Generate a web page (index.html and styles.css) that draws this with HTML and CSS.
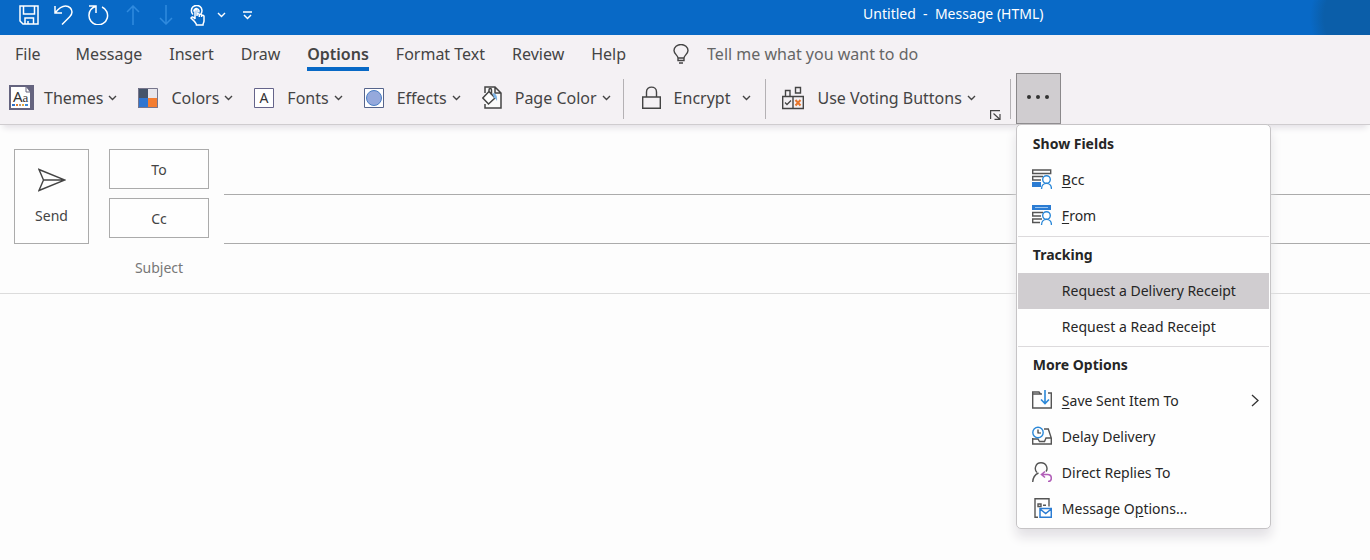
FILE: index.html
```html
<!DOCTYPE html>
<html lang="en">

<head>
    <meta charset="utf-8">
    <meta name="viewport" content="width=device-width, initial-scale=1.0">
    <title>Untitled - Message (HTML)</title>
    <link rel="stylesheet" href="styles.css">
</head>

<body>
    <svg class="sprite" aria-hidden="true">
        <symbol id="chevron" viewBox="0 0 9 6">
            <path d="M1 1l3.5 3.5L8 1" fill="none" stroke="currentColor" stroke-width="1.4" />
        </symbol>
    </svg>

    <header class="titlebar">
        <div class="quick">
            <button aria-label="Save">
                <svg width="20" height="20" viewBox="0 0 20 20"><path d="M1 1h18v18H4l-3-3zM4.500 1v8h11V1M6 19v-6h8.500v6M9 16v3" /></svg>
            </button>
            <button aria-label="Undo">
                <svg width="19" height="20" viewBox="0 0 19 20"><path d="M1 1v7h7M1.500 7.500C5 3 8 1 11.500 1c4 0 6.500 3 6.500 6 0 2-1 3.500-2.500 5L8 19.500" /></svg>
            </button>
            <button aria-label="Redo">
                <svg width="21" height="20" viewBox="0 0 21 20"><path d="M1 1h7v7M7.500 1.500C3.500 3 1 6 1 10a9.300 9.300 0 1 0 13-8" /></svg>
            </button>
            <button aria-label="Previous item" disabled>
                <svg width="14" height="20" viewBox="0 0 14 20"><path d="M7 20V1M1 7l6-6 6 6" /></svg>
            </button>
            <button aria-label="Next item" disabled>
                <svg width="14" height="20" viewBox="0 0 14 20"><path d="M7 0v19M1 13l6 6 6-6" /></svg>
            </button>
            <button aria-label="Touch mode" class="touch">
                <svg width="15" height="21" viewBox="0 0 15 21"><path d="M3 9.500A5.300 5.300 0 1 1 10.800 9M4 6.500a2.500 2.500 0 1 1 4.500 1M5 14V5.500c0-1.500 2-1.500 2 0V11M7 9.500c.5-1 2-1 2.300 0V12m0-2c.5-1 2-1 2.300 0v2m0-1.300c.5-.8 2.200-.6 2.400.5V16c0 1.500-1 2-1 4H6.500c0-1.500-1-2-2-3.500L1 13c.5-1.500 2.500-1.500 4 1" /></svg>
                <svg class="chevron"><use href="#chevron" /></svg>
            </button>
            <button aria-label="Customize toolbar">
                <svg width="13" height="9" viewBox="0 0 13 9"><path d="M2 1h9M3 4l3.500 3.500L10 4" /></svg>
            </button>
        </div>
        <h1 class="title">Untitled&nbsp; -&nbsp; Message (HTML)</h1>
    </header>

    <div class="ribbon">
        <nav class="tabs">
            <button class="file">File</button>
            <button>Message</button>
            <button>Insert</button>
            <button>Draw</button>
            <button class="active">Options</button>
            <button>Format Text</button>
            <button>Review</button>
            <button>Help</button>
            <label class="tellme">
                <svg width="16" height="20" viewBox="0 0 16 20"><path d="M5 14c0-2.500-4-4-4-7.500a7 6 0 0 1 14 0C15 10 11 11.500 11 14v2.500H5zM5 14h6M6 19h4" /></svg>
                <input type="text" aria-label="Tell me what you want to do" placeholder="Tell me what you want to do">
            </label>
        </nav>

        <div class="tools">
            <button class="tool themes">
                <svg width="25" height="25" viewBox="0 0 25 25">
                    <path d="M0 0h25v25H0z" fill="#65647f" />
                    <path d="M2 2h15l4 5v16H2z" fill="#fff" />
                    <path d="M17 2v5h4" fill="none" stroke="#65647f" />
                    <text x="4" y="17" class="glyph aa">A<tspan class="small-a">a</tspan></text>
                    <path d="M3 20h3" stroke="#2b70c9" stroke-width="2" /><path d="M7 20h2" stroke="#e07b2e" stroke-width="2" />
                    <path d="M10 20h2" stroke="#999" stroke-width="2" /><path d="M13 20h2" stroke="#e9a93c" stroke-width="2" />
                    <path d="M16 20h3" stroke="#3c8ad8" stroke-width="2" />
                </svg>
                <span>Themes</span>
                <svg class="chevron"><use href="#chevron" /></svg>
            </button>
            <button class="tool">
                <svg width="20" height="20" viewBox="0 0 20 20">
                    <path d="M0 0h10v10H0z" fill="#44546a" /><path d="M10 0h10v10H10z" fill="#e7e6ec" />
                    <path d="M0 10h10v10H0z" fill="#2f75d0" /><path d="M10 10h10v10H10z" fill="#f47d30" />
                    <path d="M.5.500h19v19H.5z" fill="none" stroke="#77768c" />
                </svg>
                <span>Colors</span>
                <svg class="chevron"><use href="#chevron" /></svg>
            </button>
            <button class="tool">
                <svg width="20" height="20" viewBox="0 0 20 20">
                    <path d="M.5.500h19v19H.5z" fill="#fff" stroke="#65648a" />
                    <text x="10" y="15" text-anchor="middle" class="glyph">A</text>
                </svg>
                <span>Fonts</span>
                <svg class="chevron"><use href="#chevron" /></svg>
            </button>
            <button class="tool">
                <svg width="20" height="20" viewBox="0 0 20 20">
                    <path d="M.5.500h19v19H.5z" fill="#fff" stroke="#56658c" />
                    <circle cx="10" cy="10" r="7.500" fill="#95a9dc" stroke="#4a7ec4" />
                </svg>
                <span>Effects</span>
                <svg class="chevron"><use href="#chevron" /></svg>
            </button>
            <button class="tool page-color">
                <svg width="20" height="23" viewBox="0 0 20 23">
                    <path d="M3 7V1h10l6 6v15H3v-4M13 1v6h6" fill="#fafafa" stroke="#444" stroke-width="1.500" />
                    <path d="M7 5.500l6 6.500-6.500 6L.8 12 7 5.500V4c0-2 2.500-2 2.500 0v5" fill="#fff" stroke="#444" stroke-width="1.500" />
                    <path d="M10.500 7c3.500 0 5 3 4.500 8-1.500-2-1-3-3-3z" fill="#7db4e6" />
                </svg>
                <span>Page Color</span>
                <svg class="chevron"><use href="#chevron" /></svg>
            </button>
            <span class="separator"></span>
            <button class="tool encrypt">
                <svg width="19" height="24" viewBox="0 0 19 24"><path d="M.7 11h17.600v11.300H.7zM4.500 11V6c0-6.500 10-6.500 10 0v5" fill="none" stroke="#444" stroke-width="1.400" /></svg>
                <span>Encrypt</span>
                <svg class="chevron"><use href="#chevron" /></svg>
            </button>
            <span class="separator"></span>
            <button class="tool voting">
                <svg width="22" height="24" viewBox="0 0 22 24">
                    <path d="M.7 10.500h20.600v12H.7zM11 10.500v12M3.500 10V4.500H8V10M13.500 1.500h5v5.500h-5z" fill="none" stroke="#444" stroke-width="1.400" />
                    <path d="M3 16.500l2 2 4-4" fill="none" stroke="#444" stroke-width="1.300" />
                    <path d="M13.500 14l5 5.500m0-5.500l-5 5.500" stroke="#e8762c" stroke-width="2" />
                </svg>
                <span>Use Voting Buttons</span>
                <svg class="chevron"><use href="#chevron" /></svg>
            </button>
            <button class="launcher" aria-label="More tracking options">
                <svg width="11" height="10" viewBox="0 0 11 10"><path d="M.6 9V.6H10M3.500 3.500l6 5.500M10 4v5.300H4.500" fill="none" stroke="#444" stroke-width="1.200" /></svg>
            </button>
            <span class="separator"></span>

            <div class="overflow">
                <button class="more" aria-label="More commands" aria-expanded="true">
                    <svg width="22" height="4" viewBox="0 0 22 4" fill="#333"><circle cx="2" cy="2" r="2" /><circle cx="11" cy="2" r="2" /><circle cx="20" cy="2" r="2" /></svg>
                </button>

                <div class="menu">
                    <h2>Show Fields</h2>
                    <button>
                        <svg width="20" height="20" viewBox="0 0 20 20" fill="none" stroke="#555" stroke-width="1.400">
                            <path d="M.7 1h18v3.500H.7zM11 7.500H.7v3.500H9" />
                            <path d="M0 13h9v5H0z" fill="#2b7cd3" stroke="none" />
                            <g stroke="#2b88d8"><circle cx="14.500" cy="10.500" r="3.800" fill="#fff" /><path d="M9.500 20c0-7.500 10-7.500 10 0" /></g>
                        </svg>
                        <span><u>B</u>cc</span>
                    </button>
                    <button>
                        <svg width="20" height="20" viewBox="0 0 20 20" fill="none" stroke="#555" stroke-width="1.400">
                            <path d="M0 0h19v5H0z" fill="#2b7cd3" stroke="none" />
                            <path d="M3 2.500h13" stroke="#9cc6f0" stroke-width="1" />
                            <path d="M11 7.500H.7v3.500H9M10 14H.7v3.500H8" />
                            <g stroke="#2b88d8"><circle cx="14.500" cy="10.500" r="3.800" fill="#fff" /><path d="M9.500 20c0-7.500 10-7.500 10 0" /></g>
                        </svg>
                        <span><u>F</u>rom</span>
                    </button>
                    <hr>
                    <h2>Tracking</h2>
                    <button class="plain selected">Request a Delivery Receipt</button>
                    <button class="plain">Request a Read Receipt</button>
                    <hr>
                    <h2>More Options</h2>
                    <button>
                        <svg width="20" height="20" viewBox="0 0 20 20" fill="none" stroke="#555" stroke-width="1.400">
                            <path d="M10 4H8.500L7 2H.7v16h18.600V3H16M.7 4H8" />
                            <path d="M13 0v13M9 9.500l4 4 4-4" stroke="#2b88d8" stroke-width="1.600" />
                        </svg>
                        <span><u>S</u>ave Sent Item To</span>
                        <svg class="arrow" width="8" height="13" viewBox="0 0 8 13"><path d="M1 1l6 5.500L1 12" fill="none" stroke="#333" stroke-width="1.300" /></svg>
                    </button>
                    <button>
                        <svg width="20" height="20" viewBox="0 0 20 20" fill="none" stroke="#555" stroke-width="1.400">
                            <path d="M.7 12v6h18.600v-6l-3-9H12M.7 13H6l1.500 2.500h5L14 12h5.300" />
                            <circle cx="6" cy="6.500" r="5.200" fill="#fff" stroke="#2b88d8" />
                            <path d="M6 3.500V7h3" stroke="#333" stroke-width="1.200" />
                        </svg>
                        <span>Delay Delivery</span>
                    </button>
                    <button>
                        <svg width="20" height="20" viewBox="0 0 20 20" fill="none" stroke="#555" stroke-width="1.400">
                            <path d="M5 10.500C2 8 3 .7 9 .7S16 7 14 9.500M.7 20c.3-5 2.300-7.500 5.800-9" />
                            <path d="M13 9.500L9.500 12.500l3.500 3M10 12.500h5.500c5 0 5 7 .5 7" stroke="#b15fb8" stroke-width="1.600" />
                        </svg>
                        <span>Direct Replies To</span>
                    </button>
                    <button>
                        <svg width="20" height="20" viewBox="0 0 20 20" fill="none" stroke="#555" stroke-width="1.400">
                            <path d="M17 8.500V.7H3v18.600h3M6 6h3v2.500H6zM11 7.200h3" />
                            <path d="M8 10.500h11.300v8.800H8zM8 11l5.700 4.500 5.600-4.500" fill="#fff" stroke="#2b7cd3" stroke-width="1.500" />
                        </svg>
                        <span>Message O<u>p</u>tions...</span>
                    </button>
                </div>
            </div>
        </div>
    </div>

    <main>
        <form class="compose">
            <button type="button" class="send">
                <svg width="28" height="24" viewBox="0 0 28 24"><path d="M1 1.500l26 10.500-26 10.500L5.500 12zM5.500 12H26" fill="none" stroke="#444" stroke-width="1.400" /></svg>
                Send
            </button>
            <button type="button" class="address">To</button>
            <input type="text" aria-label="To">
            <button type="button" class="address">Cc</button>
            <input type="text" aria-label="Cc">
            <label for="subject">Subject</label>
            <input type="text" id="subject" class="subject">
        </form>
    </main>
</body>

</html>
```
FILE: styles.css
```css
* {
    box-sizing: border-box;
}

body {
    min-height: 100vh;
    margin: 0;
    font-family: "Noto Sans", "Open Sans", sans-serif;
    font-size: 16px;
    color: #444;
    background-color: #fdfdfd;
}

button,
input {
    font: inherit;
    color: inherit;
    background: none;
    border: 0;
    padding: 0;
}

svg {
    display: block;
    flex: none;
}

.sprite {
    display: none;
}

.chevron {
    width: 9px;
    height: 6px;
}

/* title bar */

.titlebar {
    display: grid;
    grid-template-columns: 63% 1fr;
    height: 35px;
    background: radial-gradient(circle at 100% 50%, #0b5ea9 46px, #0869c6 60px);
    color: #fff;
}

.quick {
    display: flex;
    align-items: center;
    gap: 15px;
    height: 30px;
    padding-left: 19px;
}

.quick path {
    fill: none;
    stroke: currentColor;
    stroke-width: 1.5;
}

.quick button:disabled {
    color: #2f8ade;
    padding: 0 2px;
}

.touch {
    display: flex;
    align-items: center;
    gap: 12px;
}

.title {
    margin: 0;
    font-size: 14px;
    font-weight: 400;
    line-height: 28px;
}

/* ribbon */

.ribbon {
    background-color: #f4f1f4;
    border-bottom: 1px solid #cfcccf;
    box-shadow: 0 6px 6px -3px #e4e1e6;
}

.tabs {
    display: flex;
    gap: 27px;
    height: 38px;
    padding-left: 15px;
}

.tabs button {
    height: 36px;
    padding-top: 5px;
    border-bottom: 4px solid transparent;
}

.tabs .file {
    margin-right: 8px;
}

.tabs .active {
    font-weight: 600;
    border-color: #0869c6;
}

.tellme {
    display: flex;
    flex: 1;
    align-items: center;
    gap: 18px;
    padding-left: 20px;
}

.tellme path {
    fill: none;
    stroke: #444;
    stroke-width: 1.4;
}

.tellme input {
    flex: 1;
}

.tellme input::placeholder {
    color: #666;
    opacity: 1;
}

.tools {
    display: flex;
    align-items: center;
    height: 51px;
    padding-left: 9px;
}

.tool {
    display: flex;
    align-items: center;
    margin-right: 21px;
    padding-bottom: 2px;
    white-space: nowrap;
}

.tool span {
    margin: 0 5px 0 13px;
}

.tool.themes span {
    margin-left: 10px;
}

.tool.page-color {
    margin-right: 12px;
}

.tool.encrypt {
    margin: 0 14px 0 18px;
}

.tool.encrypt span {
    margin-right: 12px;
}

.tool.voting {
    margin: 0 14px 0 16px;
}

.glyph {
    font-size: 14px;
    fill: #333;
}

.aa {
    font-size: 15px;
}

.small-a {
    font-family: "Liberation Serif", serif;
    font-size: 13px;
}

.separator {
    width: 1px;
    height: 40px;
    background-color: #b4b1b4;
}

.launcher {
    align-self: flex-end;
    margin-right: 9px;
    padding-bottom: 4px;
}

.overflow {
    position: relative;
    margin-left: 5px;
}

.more {
    display: flex;
    align-items: center;
    justify-content: center;
    width: 45px;
    height: 51px;
    padding-bottom: 3px;
    background-color: #d0cdd0;
    border: 1px solid #8a888a;
}

/* drop-down menu */

.menu {
    position: absolute;
    top: 100%;
    left: 0;
    z-index: 1;
    width: 255px;
    padding: 1px;
    background-color: #fefefe;
    border: 1px solid #c6c4c6;
    border-radius: 5px;
    box-shadow: 0 8px 12px #e2e0e4;
    color: #262626;
    font-size: 14px;
}

.menu h2 {
    margin: 0;
    padding-left: 15px;
    font-size: 14px;
    font-weight: 700;
    line-height: 36px;
}

.menu button {
    display: flex;
    align-items: center;
    gap: 10px;
    width: 100%;
    height: 36px;
    padding: 0 10px 2px 14px;
}

.menu .plain {
    padding-left: 44px;
}

.menu .selected {
    background-color: #d0cdd0;
}

.menu u {
    text-underline-offset: 2px;
}

.menu hr {
    margin: 2px 0 0;
    border: 0;
    border-top: 1px solid #dcdadc;
}

.menu .selected ~ hr {
    margin-top: 1px;
}

.arrow {
    margin-left: auto;
}

/* message header */

.compose {
    display: grid;
    grid-template-columns: 75px 100px 1fr;
    grid-auto-rows: 49px;
    column-gap: 20px;
    padding: 21px 0 0 14px;
    border-bottom: 1px solid #dcdcdc;
    font-size: 14px;
}

.compose button {
    margin-top: 3px;
    background-color: #fefefe;
    border: 1px solid #ababab;
}

.compose .send {
    display: flex;
    grid-row: span 2;
    flex-direction: column;
    align-items: center;
    justify-content: center;
    gap: 14px;
}

.address {
    height: 40px;
}

.compose input {
    margin-left: -5px;
    border-bottom: 1px solid #ababab;
}

.compose label {
    grid-column: 2;
    color: #777;
    line-height: 48px;
    text-align: center;
}

.compose .subject {
    border-bottom: 0;
}
```
